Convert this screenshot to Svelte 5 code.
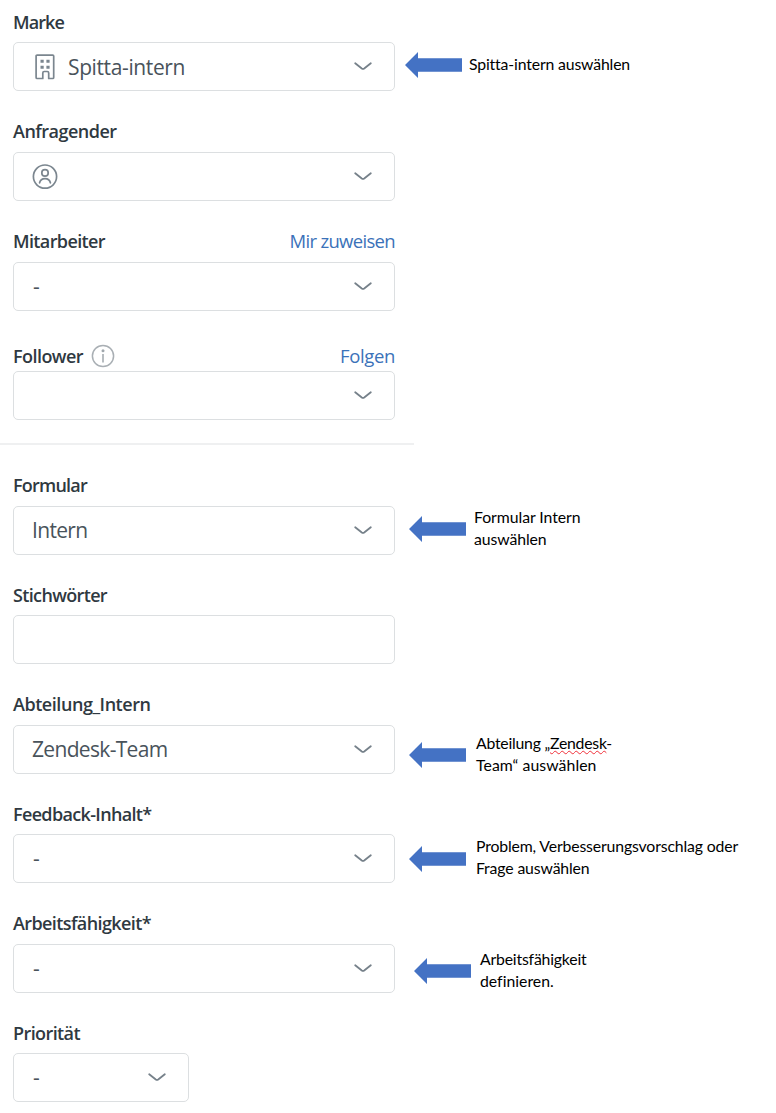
<script>
  // the request part of the sidebar
  const requestFields = [
    {
      label: "Marke",
      labelWidth: 51,
      value: "Spitta-intern",
      valueWidth: 117,
      icon: "building",
      note: { cls: "brand", lines: [{ text: "Spitta-intern auswählen", width: 160.5 }] },
    },
    { label: "Anfragender", labelWidth: 103.5, icon: "user", raised: true },
    {
      label: "Mitarbeiter",
      labelWidth: 92,
      value: "-",
      link: "Mir zuweisen",
      linkWidth: 105.5,
      raised: true,
    },
    {
      label: "Follower",
      labelWidth: 70,
      info: true,
      link: "Folgen",
      linkWidth: 55,
    },
  ];

  // the form part, below the divider
  const formFields = [
    {
      label: "Formular",
      labelWidth: 74,
      value: "Intern",
      valueWidth: 55.5,
      raised: true,
      note: {
        cls: "form",
        lines: [
          { text: "Formular Intern", width: 106.5 },
          { text: "auswählen", width: 72.5 },
        ],
      },
    },
    { label: "Stichwörter", labelWidth: 94, plain: true },
    {
      label: "Abteilung_Intern",
      labelWidth: 137.5,
      value: "Zendesk-Team",
      valueWidth: 135.5,
      raised: true,
      note: {
        cls: "department",
        lines: [
          { text: "Abteilung „", typo: "Zendesk", rest: "-", width: 136 },
          { text: "Team“ auswählen", width: 120.5 },
        ],
      },
    },
    {
      label: "Feedback-Inhalt*",
      labelWidth: 138.5,
      value: "-",
      note: {
        cls: "feedback",
        lines: [
          { text: "Problem, Verbesserungsvorschlag oder", width: 262 },
          { text: "Frage auswählen", width: 113.5 },
        ],
      },
    },
    {
      label: "Arbeitsfähigkeit*",
      labelWidth: 138,
      value: "-",
      raised: true,
      note: {
        cls: "ability",
        lines: [
          { text: "Arbeitsfähigkeit", width: 106.5 },
          { text: "definieren.", width: 73.5 },
        ],
      },
    },
    { label: "Priorität", labelWidth: 67, value: "-", small: true },
  ];

  // spreads or tightens the letters until the text has the given width
  const fit = (node, width) => {
    if (!width) return;
    const current = node.getBoundingClientRect().width;
    const letters = node.textContent.length;
    node.style.letterSpacing = `${(width - current) / letters}px`;
  };
</script>

{#snippet row(field)}
  <div class="row">
    <div class="field">
      <div class="label-row" class:raised={field.raised} class:with-info={field.info}>
        <span class="label" use:fit={field.labelWidth}>{field.label}</span>
        {#if field.info}
          <svg class="info" width="24" height="24" viewBox="0 0 24 24" fill="none">
            <circle cx="12" cy="12" r="10.6" stroke="#a9afb4" stroke-width="1.5" />
            <path d="M12 10v8.5" stroke="#a0a7ad" stroke-width="1.5" />
            <circle cx="12" cy="6.7" r="1.5" fill="#a0a7ad" />
          </svg>
        {/if}
        {#if field.link}
          <span class="link" use:fit={field.linkWidth}>{field.link}</span>
        {/if}
      </div>
      <div class="box" class:small={field.small}>
        {#if field.icon === "building"}
          <svg
            class="icon"
            width="26"
            height="26"
            viewBox="0 0 26 26"
            fill="none"
            stroke="#7b868f"
            stroke-width="1.7"
            stroke-linejoin="round"
          >
            <path
              d="M5.1 1.1h15.6q1 0 1 1v21.4q0 1-1 1h-4v-5.6q0-1.4-1.4-1.4h-3.1q-1.4 0-1.4 1.4v5.6H5.1q-1 0-1-1V2.1q0-1 1-1z"
            />
            <path
              d="M8.5 7.2h3.2M14.4 7.2h3.2M8.5 13.2h3.2M14.4 13.2h3.2"
              stroke-width="3.1"
            />
          </svg>
        {:else if field.icon === "user"}
          <svg
            class="icon"
            width="26"
            height="26"
            viewBox="0 0 26 26"
            fill="none"
            stroke="#7b868f"
            stroke-width="1.7"
            stroke-linecap="round"
          >
            <circle cx="13" cy="12.6" r="11.6" />
            <circle cx="13" cy="8.9" r="3.2" />
            <path d="M7.6 18.8c.6-2.8 2.6-4.2 5.4-4.2s4.8 1.4 5.4 4.2" />
          </svg>
        {/if}
        {#if field.value}
          <span
            class="value"
            class:empty={field.value === "-"}
            use:fit={field.valueWidth}>{field.value}</span
          >
        {/if}
        {#if !field.plain}
          <svg
            class="chevron"
            width="18"
            height="10"
            viewBox="0 0 18 10"
            fill="none"
            stroke="#76818a"
            stroke-width="1.8"
            stroke-linecap="round"
          >
            <path d="M1.2 1.2l6.6 5.3q1.2.9 2.4 0l6.6-5.3" />
          </svg>
        {/if}
      </div>
    </div>
    {#if field.note}
      <div class="note {field.note.cls}">
        <svg class="arrow" width="58" height="26" viewBox="0 0 58 26">
          <path d="M0 13L13 0v6.3h44v13.4H13V26z" fill="#4472c4" />
        </svg>
        <div class="note-text">
          {#each field.note.lines as line}
            <div>
              <span use:fit={line.width}
                >{line.text}{#if line.typo}<span class="typo">{line.typo}</span
                  >{line.rest}{/if}</span
              >
            </div>
          {/each}
        </div>
      </div>
    {/if}
  </div>
{/snippet}

<main>
  <section class="request">
    {#each requestFields as field}
      {@render row(field)}
    {/each}
  </section>
  <hr />
  <section class="form-fields">
    {#each formFields as field}
      {@render row(field)}
    {/each}
  </section>
</main>

<style>
  :global(body) {
    background: #fff;
  }

  main {
    width: 776px;
    height: 1113px;
    overflow: hidden;
    box-sizing: border-box;
    padding-top: 10px;
    font-family: "Open Sans", "Noto Sans", sans-serif;
    color: #2f3941;
  }

  section {
    display: grid;
    padding-left: 13px;
  }

  .request {
    grid-template-rows: 110px 110px 109px 104px;
  }

  .form-fields {
    grid-template-rows: 109px 110px 109px 110px 109px 81px;
    padding-top: 29px;
  }

  hr {
    width: 414px;
    height: 2px;
    margin: 0;
    border: 0;
    background: #eff0f1;
  }

  .row {
    display: flex;
    align-items: flex-start;
    height: 81px;
  }

  .field {
    width: 382px;
    flex: none;
  }

  /* label line */
  .label-row {
    display: flex;
    align-items: center;
    height: 24px;
    padding-bottom: 8px;
    line-height: 24px;
    white-space: nowrap;
  }

  .raised {
    height: 23px;
    padding-bottom: 9px;
    line-height: 23px;
  }

  .with-info {
    padding-top: 5px;
    padding-bottom: 3px;
  }

  .label {
    font-size: 18px;
    font-weight: 600;
  }

  .info {
    margin-left: 8px;
  }

  .link {
    margin-left: auto;
    font-size: 18.5px;
    color: #3b72b9;
  }

  .raised .link {
    margin-top: -2px;
  }

  /* select boxes */
  .box {
    display: flex;
    align-items: center;
    box-sizing: border-box;
    height: 49px;
    padding: 0 22px 0 18px;
    border: 1.5px solid #dcdfe1;
    border-radius: 5px;
  }

  .small {
    width: 176px;
  }

  .icon {
    margin-right: 10px;
    flex: none;
  }

  .value {
    font-size: 21px;
    line-height: 28px;
    white-space: nowrap;
    color: #49535b;
  }

  .empty {
    margin-top: -1px;
    margin-left: 1px;
  }

  .raised + .box .value {
    margin-top: -1px;
  }

  .chevron {
    margin-left: auto;
    flex: none;
  }

  /* notes beside the fields */
  .note {
    display: flex;
    align-items: center;
    height: 49px;
    margin-top: 32px;
    margin-left: 14px;
    font-family: Lato, "Open Sans", sans-serif;
    font-size: 15.8px;
    line-height: 22px;
    white-space: nowrap;
    color: #000;
  }

  .note-text {
    padding-bottom: 1px;
  }

  .feedback .note-text {
    padding-bottom: 3px;
  }

  .arrow {
    margin-right: 9px;
    flex: none;
  }

  .brand {
    margin-top: 30px;
    margin-left: 10px;
  }

  .brand .arrow {
    margin-right: 6px;
  }

  .form {
    margin-top: 30px;
  }

  .form .arrow {
    margin-right: 7px;
  }

  .department {
    margin-top: 37px;
  }

  .ability {
    margin-top: 34px;
    margin-left: 19px;
  }

  .ability .arrow {
    margin-right: 8px;
  }

  .typo {
    text-decoration: underline wavy #f0303a 1px;
    text-decoration-skip-ink: none;
    text-underline-offset: 1px;
  }
</style>
